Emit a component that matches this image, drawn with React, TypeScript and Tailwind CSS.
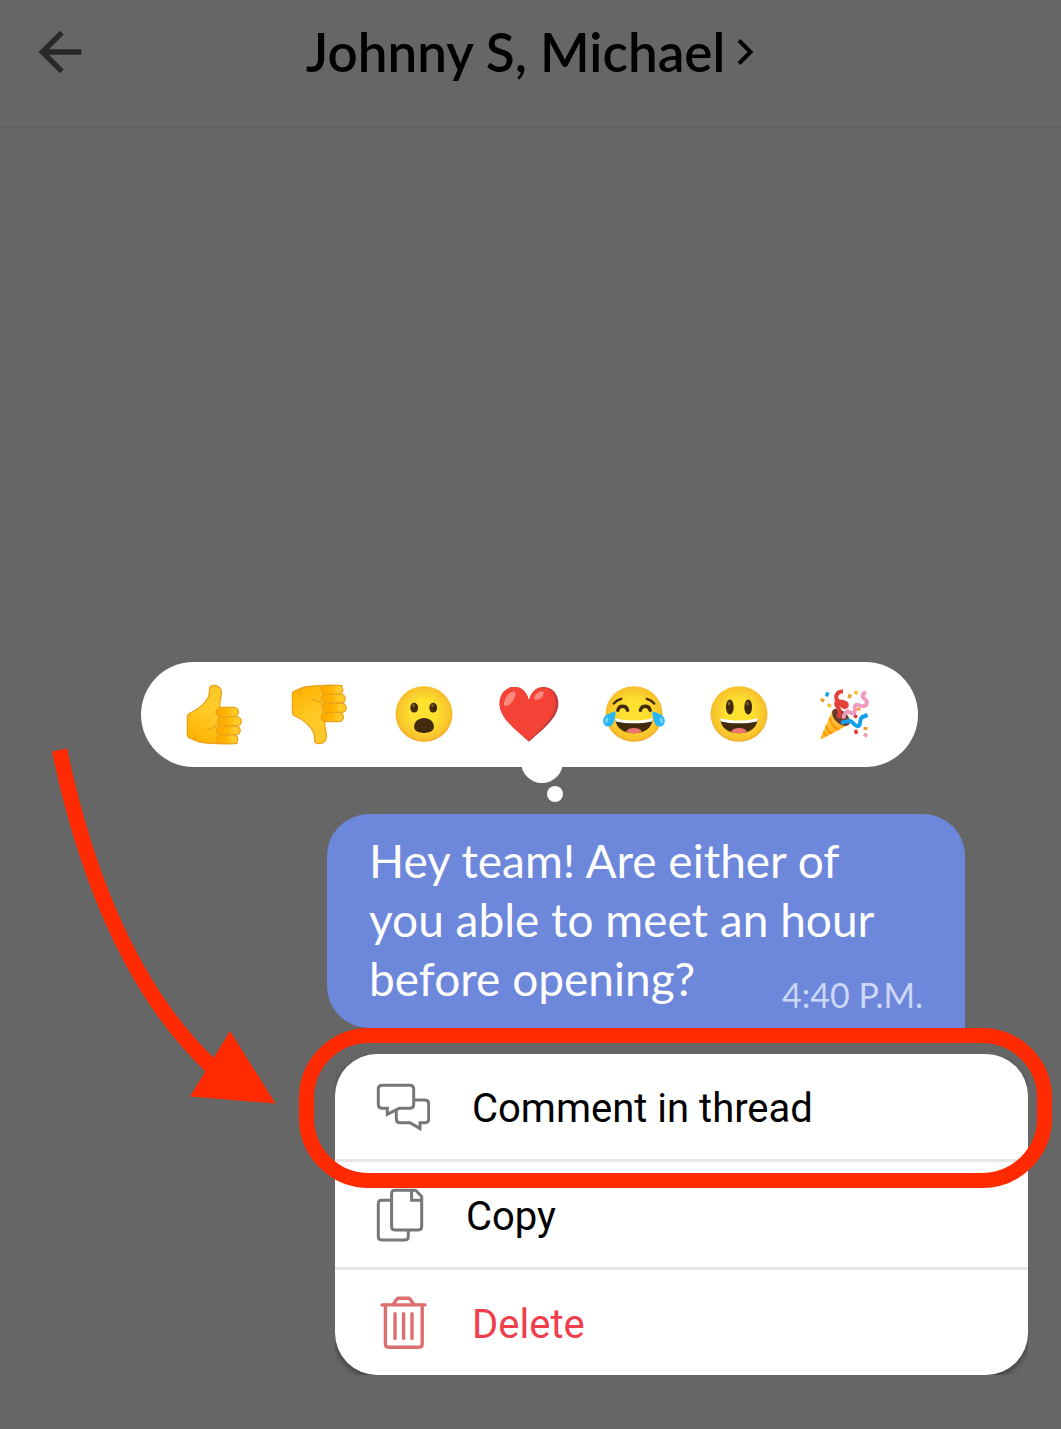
import React from 'react';

interface IconProps {
  className?: string;
}

const BackIcon: React.FC<IconProps> = ({ className }) => (
  <svg viewBox="0 0 24 24" fill="currentColor" className={className} aria-hidden="true">
    <path d="M20 11H7.83l5.59-5.59L12 4l-8 8 8 8 1.41-1.41L7.83 13H20v-2z" />
  </svg>
);

const ChevronIcon: React.FC<IconProps> = ({ className }) => (
  <svg viewBox="0 0 18 28" fill="none" stroke="currentColor" strokeWidth="4" className={className} aria-hidden="true">
    <path d="M2 2.5 L13.5 14 L2 25.5" />
  </svg>
);

const CommentIcon: React.FC = () => (
  <svg
    width="54"
    height="48"
    viewBox="0 0 54 48"
    fill="none"
    stroke="#777777"
    strokeWidth="3"
    className="shrink-0"
    aria-hidden="true"
  >
    <path d="M6.3 2.3H33.7Q37.7 2.3 37.7 6.3V21.3Q37.7 25.3 33.7 25.3H23.3L11.3 31.3V25.3H6.3Q2.3 25.3 2.3 21.3V6.3Q2.3 2.3 6.3 2.3Z" />
    <path d="M38 17H48.7Q52.7 17 52.7 21V35.7Q52.7 39.7 48.7 39.7H44V45.6L34 39.7H24.3Q20.3 39.7 20.3 35.7V26.5" />
  </svg>
);

const CopyIcon: React.FC = () => (
  <svg
    width="48"
    height="54"
    viewBox="0 0 48 54"
    fill="none"
    stroke="#777777"
    strokeWidth="3"
    className="shrink-0"
    aria-hidden="true"
  >
    <path d="M19 2.3H39.5L45.7 8.5V38.6Q45.7 42 42.3 42H19Q15.6 42 15.6 38.6V5.7Q15.6 2.3 19 2.3Z" />
    <path d="M35.6 2.3V12.3H45.7" />
    <path d="M15.6 12.3H5.7Q2.3 12.3 2.3 15.7V48.6Q2.3 52 5.7 52H28.9Q32.3 52 32.3 48.6V42" />
  </svg>
);

const TrashIcon: React.FC = () => (
  <svg
    width="54"
    height="54"
    viewBox="0 0 54 54"
    fill="none"
    stroke="#db6e6e"
    strokeWidth="3.4"
    strokeLinecap="round"
    className="shrink-0"
    aria-hidden="true"
  >
    <path d="M6 8.9H49" />
    <path d="M17.2 8.5L21 3Q21.6 2.2 22.8 2.2H32.2Q33.4 2.2 34 3L37.8 8.5" />
    <path d="M9.4 9V48Q9.4 51.2 12.6 51.2H43Q46.2 51.2 46.2 48V9" />
    <path d="M19 17.6V42.4M27.6 17.6V42.4M36 17.6V42.4" />
  </svg>
);

const EmojiDefs: React.FC = () => (
  <svg className="absolute size-0" aria-hidden="true">
    <defs>
      <radialGradient id="face" cx="50%" cy="48%" r="52%">
        <stop offset="0.45" stopColor="#fde030" />
        <stop offset="0.92" stopColor="#f7c02b" />
        <stop offset="1" stopColor="#f4a223" />
      </radialGradient>
      <linearGradient id="finger" x1="0" x2="1" y1="0" y2="0">
        <stop offset="0" stopColor="#ffa800" />
        <stop offset="0.45" stopColor="#ffb300" />
        <stop offset="0.75" stopColor="#ffca28" />
      </linearGradient>
      <linearGradient id="palm" x1="0" x2="0.5" y1="1" y2="0">
        <stop offset="0.1" stopColor="#ffb300" />
        <stop offset="0.6" stopColor="#ffca28" />
      </linearGradient>
      <linearGradient id="cone" x1="0" x2="1" y1="0" y2="1">
        <stop offset="0.2" stopColor="#ffd54f" />
        <stop offset="1" stopColor="#ff8f00" />
      </linearGradient>
    </defs>
  </svg>
);

const Thumb: React.FC = () => (
  <g stroke="#eba21a" strokeWidth="1.3" strokeLinejoin="round">
    <path
      fill="url(#palm)"
      d="M5.4 35Q5.4 32 8 31C14 28.5 17 26.5 21 22.5C26 17 27.8 14 27.6 6.5Q27.6 3.4 32 3.4C36 3.4 39.4 6 39.4 10.5C39.4 16 37.6 18 37.6 25L46 30V58L55 61.4C40 62 26 61.5 18 60C14 59.3 12 57.2 9 56.6Q5.4 55.8 5.4 52.5Z"
    />
    <path fill="none" d="M12.6 50.5C12.3 53.5 12.6 56 14 58M25 47.5C29.5 47.4 32.6 45.6 34.8 42.4" />
    <rect x="34.2" y="25.3" width="22.2" height="9.4" rx="4.7" fill="url(#finger)" />
    <rect x="35.4" y="34.7" width="23.8" height="9.3" rx="4.6" fill="url(#finger)" />
    <rect x="34.2" y="44" width="24" height="8.8" rx="4.4" fill="url(#finger)" />
    <rect x="34.2" y="52.8" width="21.6" height="8.8" rx="4.4" fill="url(#finger)" />
  </g>
);

const ThumbsUp: React.FC = () => <Thumb />;

const ThumbsDown: React.FC = () => (
  <g transform="matrix(1 0 0 -1 0 65)">
    <Thumb />
  </g>
);

const Face: React.FC = () => <ellipse cx="32" cy="32" rx="28.5" ry="27.8" fill="url(#face)" />;

const Grin: React.FC = () => (
  <>
    <path d="M13.4 37C25 40.4 39 40.4 50.6 37C50.4 45.5 43 51.3 32 51.3C21 51.3 13.6 45.5 13.4 37Z" fill="#422b0d" />
    <path d="M24 49.7C25.5 46.8 28.5 46 32 46C35.5 46 38.5 46.8 40 49.7C35.5 51.8 28.5 51.8 24 49.7Z" fill="#ed7770" />
    <path d="M13.2 36.2C25 39.4 39 39.4 50.8 36.2Q51 38 50 39.4C39 42 25 42 14 39.4Q13 38 13.2 36.2Z" fill="#ffffff" />
  </>
);

const OpenMouth: React.FC = () => (
  <>
    <Face />
    <ellipse cx="22.2" cy="25.7" rx="3.9" ry="4.9" fill="#422b0d" />
    <ellipse cx="41.2" cy="25.7" rx="3.9" ry="4.9" fill="#422b0d" />
    <ellipse cx="21.5" cy="23.4" rx="1.3" ry="1.5" fill="#896024" />
    <ellipse cx="40.5" cy="23.4" rx="1.3" ry="1.5" fill="#896024" />
    <path d="M32 36C37.5 36 41.9 40 41.9 44.6C41.9 49.3 37.5 51 32 51C26.5 51 22.1 49.3 22.1 44.6C22.1 40 26.5 36 32 36Z" fill="#422b0d" />
  </>
);

const Heart: React.FC = () => (
  <>
    <path
      fill="#c33a3d"
      d="M46.5 5C38.5 5 33.8 11 32 18.8C30.2 11 25.5 5 17.5 5C9 5 2.6 11.5 2.6 21.5C2.6 36 18 47 32 59.8C46 47 61.4 36 61.4 21.5C61.4 11.5 55 5 46.5 5Z"
    />
    <path
      fill="#f44336"
      d="M44.5 5.5C38 6.2 33.8 11 32 18.8C30.2 11 25.5 5 17.5 5C9 5 2.6 11.5 2.6 21.5C2.6 36 18 47 31.5 58.8C45 46.5 58.6 34 58.6 20.5C58.6 11 52.5 4.8 44.5 5.5Z"
    />
    <ellipse cx="12.7" cy="16.8" rx="3.8" ry="8.5" fill="#ff897f" transform="rotate(35 12.7 16.8)" />
    <ellipse cx="42" cy="13.6" rx="3" ry="5.6" fill="#ff897f" transform="rotate(50 42 13.6)" />
  </>
);

const Joy: React.FC = () => (
  <>
    <Face />
    <g fill="none" stroke="#422b0d" strokeLinecap="round">
      <path strokeWidth="2.4" d="M11.8 21.6Q15 17.8 19.2 16.8M52.2 21.6Q49 17.8 44.8 16.8" />
      <path strokeWidth="3.4" d="M15.8 28.3C17.2 22.8 24.2 22.8 25.6 28.3M38.4 28.3C39.8 22.8 46.8 22.8 48.2 28.3" />
    </g>
    <Grin />
    <path fill="#29b6f6" d="M13.6 29.2C13.3 36 12 44.6 6.2 44.6C2.6 44.6 1.2 41.8 1.2 38.8C1.2 32.8 7.6 31.4 13.6 29.2Z" />
    <path fill="#29b6f6" d="M50.4 29.2C50.7 36 52 44.6 57.8 44.6C61.4 44.6 62.8 41.8 62.8 38.8C62.8 32.8 56.4 31.4 50.4 29.2Z" />
    <ellipse cx="4.6" cy="38.4" rx="1.4" ry="3" fill="#81d4fa" transform="rotate(20 4.6 38.4)" />
    <ellipse cx="59.4" cy="38.4" rx="1.4" ry="3" fill="#81d4fa" transform="rotate(-20 59.4 38.4)" />
  </>
);

const Smile: React.FC = () => (
  <>
    <Face />
    <ellipse cx="22.8" cy="25" rx="3.9" ry="7.6" fill="#422b0d" />
    <ellipse cx="41.2" cy="25" rx="3.9" ry="7.6" fill="#422b0d" />
    <ellipse cx="22" cy="21.5" rx="1.2" ry="1.9" fill="#896024" />
    <ellipse cx="40.4" cy="21.5" rx="1.2" ry="1.9" fill="#896024" />
    <Grin />
  </>
);

const Party: React.FC = () => (
  <>
    <path d="M8.4 55.8L20.6 28C25 29 36 37 37.6 42L10 57Q8 57.6 8.4 55.8Z" fill="url(#cone)" />
    <path d="M17.6 35.5Q19.6 45 27 48M14 43.5Q15.5 50 20.4 51.6M11.6 49.5Q12.5 53 15 54.3" fill="none" stroke="#ff9100" strokeWidth="1.8" />
    <ellipse cx="29" cy="35.3" rx="10.8" ry="6.2" fill="#6d3a2c" transform="rotate(42 29 35.3)" />
    <g fill="none" strokeWidth="4">
      <path
        stroke="#e5413b"
        d="M26 35.5C28.5 32 28 28 25.4 24.5C23 21 24 19.4 28 19.6C32 19.8 35.6 21 34.6 24C33 26.6 28.8 23.4 24.8 17.8C23 12.6 26 9.4 31 9.6"
      />
      <path
        stroke="#f09bbd"
        d="M31.2 36.6C32 31.6 34 28.6 37 30C40 31.8 43 32.4 43 28C42 23.6 43.6 22 47 23.2C51 25 55.4 24.4 54.8 20C54.4 16.8 50 16.4 50.6 13.4Q51 11.4 54.2 10.8"
      />
      <path
        stroke="#12a0ec"
        d="M29 40.4C33 40.6 36 38.2 38.8 39.2C42 41 43 44.6 46 44.2C49.6 43.6 47 37.6 49.6 35.6Q52 34.2 55.6 33"
      />
    </g>
    <g fill="#f29c2c">
      <rect x="8.6" y="16.2" width="3.8" height="3.4" transform="rotate(25 10 18)" />
      <rect x="36" y="12.4" width="3.4" height="4" transform="rotate(20 38 14)" />
      <rect x="45.2" y="25.6" width="3.2" height="3" />
      <rect x="51.6" y="45" width="3.8" height="3" />
    </g>
    <g fill="#fbc02d">
      <rect x="15.6" y="21.6" width="3.8" height="3.4" transform="rotate(30 17 23)" />
      <rect x="42.4" y="8.8" width="3.6" height="3.6" transform="rotate(25 44 10)" />
    </g>
    <rect x="13.6" y="10.2" width="3.4" height="4.2" fill="#12a0ec" transform="rotate(20 15 12)" />
    <g fill="#e0383e">
      <rect x="42.2" y="32.8" width="3.4" height="3.4" transform="rotate(35 44 34)" />
      <rect x="42.4" y="47.8" width="3.4" height="4.2" transform="rotate(-20 44 50)" />
    </g>
    <rect x="51.8" y="51.6" width="3.8" height="3.6" fill="#f09bbd" transform="rotate(35 54 53)" />
  </>
);

const reactions = [
  { name: 'Thumbs up', Drawing: ThumbsUp },
  { name: 'Thumbs down', Drawing: ThumbsDown },
  { name: 'Surprised', Drawing: OpenMouth },
  { name: 'Heart', Drawing: Heart },
  { name: 'Tears of joy', Drawing: Joy },
  { name: 'Smile', Drawing: Smile },
  { name: 'Party', Drawing: Party },
];

const ReactionBar: React.FC = () => (
  <div className="relative ml-[141px] mr-[143px] mb-[47px] flex rounded-full bg-white px-[21px] py-5">
    {reactions.map(({ name, Drawing }) => (
      <button key={name} type="button" aria-label={name} className="flex flex-1 justify-center">
        <svg width="65" height="65" viewBox="0 0 65 65" aria-hidden="true">
          <Drawing />
        </svg>
      </button>
    ))}
    <span className="absolute -bottom-4 left-[380px] size-[42px] rounded-full bg-white" />
    <span className="absolute -bottom-[35px] left-[406px] size-4 rounded-full bg-white" />
  </div>
);

const MessageBubble: React.FC = () => (
  <div className="ml-[327px] mr-24 mb-[26px] rounded-[42px] rounded-br-none bg-[#6d87db] px-[42px] pt-[17px] pb-1 font-['Lato',sans-serif] text-[46px] leading-[59px] text-white">
    <p>Hey team! Are either of</p>
    <p>you able to meet an hour</p>
    <div className="flex justify-between">
      <p>before opening?</p>
      <time className="pt-4 text-[34px] text-[#cdd7f8]">4:40 P.M.</time>
    </div>
  </div>
);

const actions = [
  { label: 'Comment in thread', Icon: CommentIcon, color: 'text-black' },
  { label: 'Copy', Icon: CopyIcon, color: 'text-black' },
  { label: 'Delete', Icon: TrashIcon, color: 'text-[#ee404c]' },
];

const ActionMenu: React.FC = () => (
  <div className="relative ml-[335px] mr-[33px] font-['Roboto',sans-serif] text-[40px]">
    <div className="overflow-hidden">
      <ul className="divide-y-3 divide-[#e7e7e7] overflow-hidden rounded-[42px] bg-white shadow-[0_3px_6px_rgba(0,0,0,0.4)]">
        {actions.map(({ label, Icon, color }) => (
          <li key={label}>
            <button type="button" className={`flex h-[105px] w-full items-center gap-[42px] pl-[41px] ${color}`}>
              <Icon />
              <span className="pt-1">{label}</span>
            </button>
          </li>
        ))}
      </ul>
    </div>
    {/* highlight around the first action */}
    <div className="pointer-events-none absolute -top-[26px] -right-6 -left-9 h-40 rounded-[70px] border-[15px] border-[#ff2a00]" />
  </div>
);

export default function App() {
  return (
    <div className="flex min-h-screen flex-col bg-[#666666]">
      <EmojiDefs />
      <header className="grid h-32 grid-cols-[92px_1fr_92px] items-start border-b-2 border-[#606060] pt-5 shadow-[0_1px_2px_rgba(0,0,0,0.05)]">
        <button type="button" aria-label="Back" className="ml-7 size-16 text-[#282828]">
          <BackIcon className="size-16" />
        </button>
        <h1 className="text-center">
          <a
            href="#details"
            className="inline-flex h-16 items-center gap-3 whitespace-nowrap font-['Lato',sans-serif] text-[53px] font-semibold text-black"
          >
            Johnny S, Michael
            <ChevronIcon className="h-7 w-[18px]" />
          </a>
        </h1>
      </header>

      <main className="relative flex flex-1 flex-col justify-end pb-[54px]">
        <ReactionBar />
        <MessageBubble />
        <ActionMenu />
        <svg
          width="240"
          height="370"
          viewBox="44 742 240 370"
          className="pointer-events-none absolute bottom-[317px] left-11"
          aria-hidden="true"
        >
          <path d="M59.5 750Q105 966 212 1067" fill="none" stroke="#ff2a00" strokeWidth="15.5" />
          <path d="M190 1096.5L230 1031L275.5 1103.5Z" fill="#ff2a00" />
        </svg>
      </main>
    </div>
  );
}
